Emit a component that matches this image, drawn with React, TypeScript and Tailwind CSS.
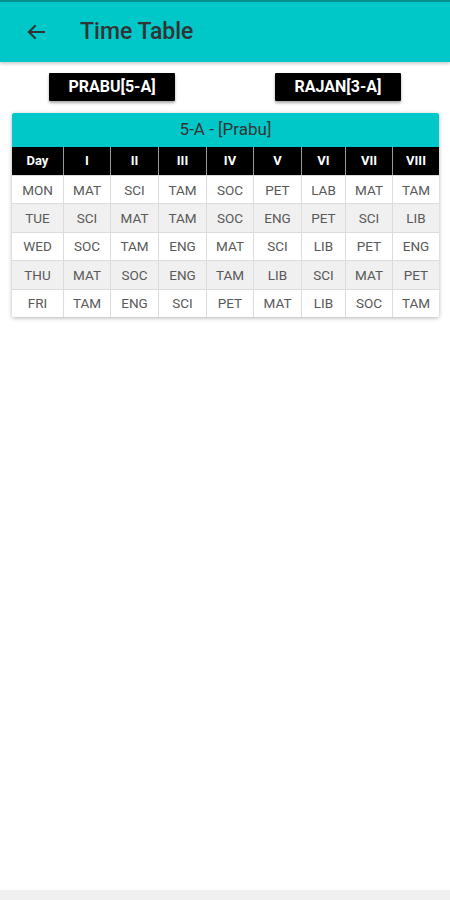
import React from "react";

const cols = ["Day", "I", "II", "III", "IV", "V", "VI", "VII", "VIII"];
const rows = [
  ["MON", "MAT", "SCI", "TAM", "SOC", "PET", "LAB", "MAT", "TAM"],
  ["TUE", "SCI", "MAT", "TAM", "SOC", "ENG", "PET", "SCI", "LIB"],
  ["WED", "SOC", "TAM", "ENG", "MAT", "SCI", "LIB", "PET", "ENG"],
  ["THU", "MAT", "SOC", "ENG", "TAM", "LIB", "SCI", "MAT", "PET"],
  ["FRI", "TAM", "ENG", "SCI", "PET", "MAT", "LIB", "SOC", "TAM"],
];

const grid = "grid grid-cols-[51px_47px_48px_48px_47px_48px_44px_47px_47px]";

export default function App() {
  return (
    <div className="w-[450px] h-[900px] bg-white flex flex-col font-['Roboto',sans-serif]">
      <div className="h-[2px] bg-[#0a8f8a]" />
      <div className="h-[60px] bg-[#00c8c8] flex items-center shadow-[0_2px_3px_rgba(0,0,0,0.2)]">
        <svg width="24" height="24" viewBox="0 0 24 24" className="ml-[24px]" fill="none" stroke="#333" strokeWidth="2" strokeLinecap="square">
          <path d="M20 12H5" />
          <path d="M11 6l-6 6 6 6" />
        </svg>
        <span className="ml-[32px] text-[23px] text-[#333] font-medium">Time Table</span>
      </div>
      <div className="flex justify-between px-[49px] mt-[11px]">
        <div className="w-[126px] h-[28px] bg-black text-white text-[16px] font-bold flex items-center justify-center shadow-[0_2px_3px_rgba(0,0,0,0.35)] rounded-[1px]">
          PRABU[5-A]
        </div>
        <div className="w-[126px] h-[28px] bg-black text-white text-[16px] font-bold flex items-center justify-center shadow-[0_2px_3px_rgba(0,0,0,0.35)] rounded-[1px]">
          RAJAN[3-A]
        </div>
      </div>
      <div className="mx-[12px] mt-[12px] w-[427px] shadow-[0_1px_4px_rgba(0,0,0,0.3)] rounded-[2px] overflow-hidden">
        <div className="h-[34px] bg-[#00c8c8] flex items-center justify-center text-[17px] text-[#333]">
          5-A - [Prabu]
        </div>
        <div className={`${grid} bg-black h-[28px]`}>
          {cols.map((c, i) => (
            <div
              key={c}
              className={`flex items-center justify-center text-white text-[13px] font-bold ${i > 0 ? "border-l border-[#9a9a9a]" : ""}`}
            >
              {c}
            </div>
          ))}
        </div>
        {rows.map((r, ri) => (
          <div
            key={ri}
            className={`${grid} h-[28.4px] border-t border-[#dcdcdc] ${ri % 2 === 1 ? "bg-[#f0f0f0]" : "bg-white"}`}
          >
            {r.map((c, ci) => (
              <div
                key={ci}
                className={`flex items-center justify-center text-[13.5px] text-[#595959] ${ci > 0 ? "border-l border-[#dcdcdc]" : ""}`}
              >
                {c}
              </div>
            ))}
          </div>
        ))}
      </div>
      <div className="flex-1" />
      <div className="h-[10px] bg-[#f0f0f0]" />
    </div>
  );
}
